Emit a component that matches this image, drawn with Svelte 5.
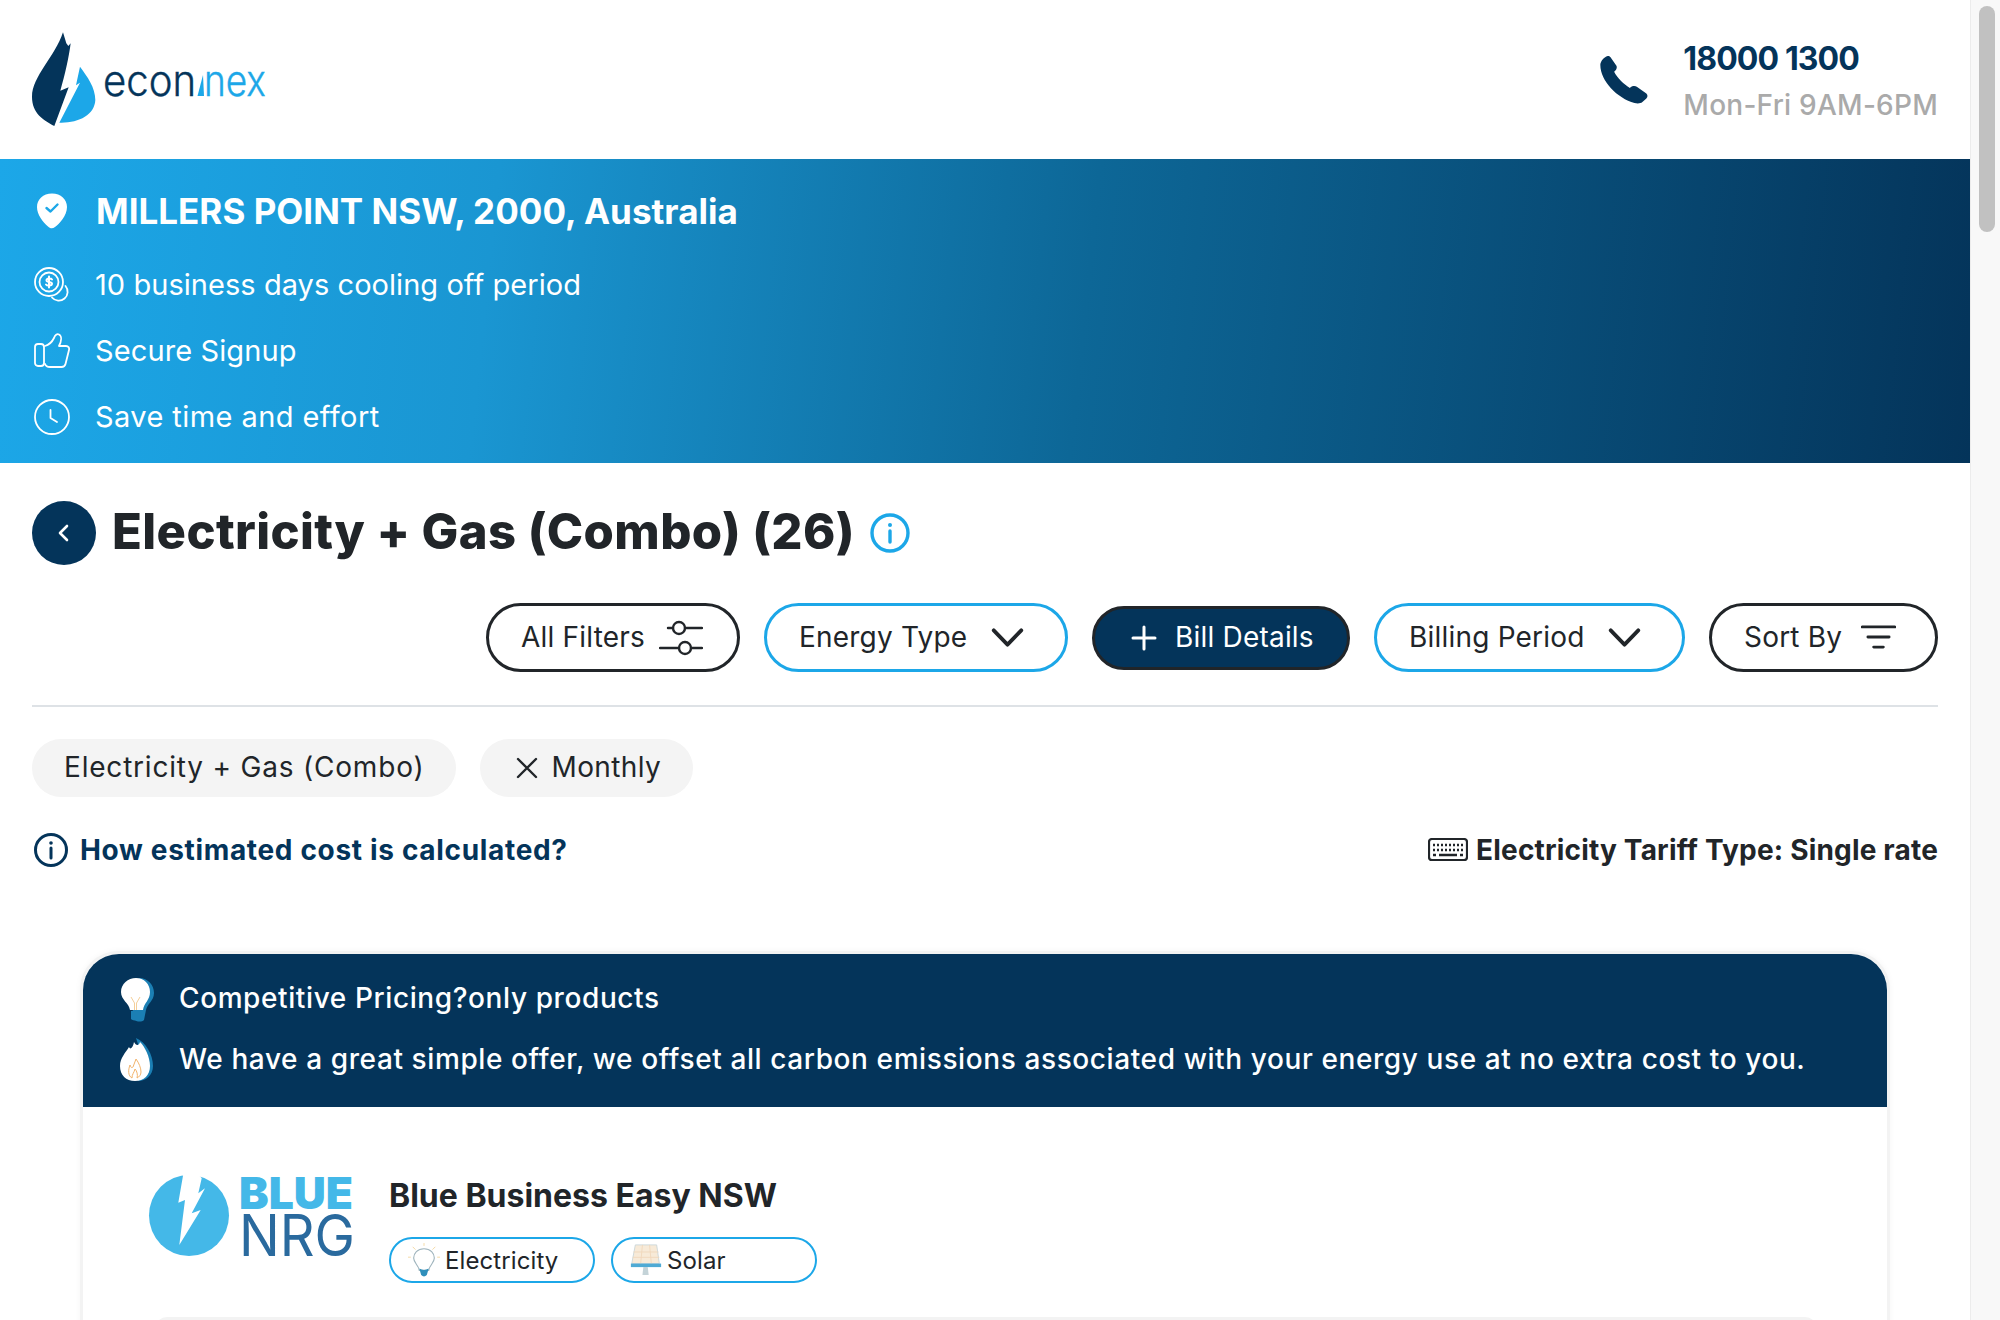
<script>
  const perks = [
    { text: '10 business days cooling off period', icon: 'coin' },
    { text: 'Secure Signup', icon: 'like' },
    { text: 'Save time and effort', icon: 'clock' }
  ];
</script>

<div class="page">
  <main class="main">
    <header class="header">
      <svg class="logo" viewBox="0 0 300 160" width="300" height="160" role="img" aria-label="econnex">
        <g transform="scale(0.3333)">
          <path fill="#04345a" d="M189 97 L199 130 L205 138 L212 130 C207 170 195 225 181 272 L206 262 L163 378 C130 360 96 340 96 290 C96 230 165 170 189 97 Z"/>
          <path fill="#1ca7e8" d="M240 200 C262 230 286 262 286 300 C284 345 235 370 178 368 L240 248 L228 256 Z"/>
        </g>
        <text class="logo-text" x="103" y="96" textLength="93" lengthAdjust="spacingAndGlyphs" fill="#04345a" stroke="#04345a" stroke-width="0.4">econ</text>
        <text class="logo-text" x="204" y="96" textLength="62" lengthAdjust="spacingAndGlyphs" fill="#1ca7e8" stroke="#1ca7e8" stroke-width="0.4">nex</text>
        <path fill="#1ca7e8" d="M203 75 L197.500 96 L204 96 Z"/>
      </svg>
      <div class="contact">
        <svg class="phone" viewBox="117 168 146 146" width="48" height="48" aria-hidden="true">
          <path fill="#04345a" d="M135 170 C140 167 146 168 149 172 L167 198 C170 204 166 212 160 216 C170 236 190 254 208 265 C214 258 224 258 230 262 L258 282 C263 287 262 293 258 297 L246 308 C240 313 230 313 222 311 C170 296 118 244 118 195 C118 186 126 175 135 170 Z"/>
        </svg>
        <div class="contact-text">
          <div class="tel">18000 1300</div>
          <div class="hours">Mon-Fri 9AM-6PM</div>
        </div>
      </div>
    </header>

    <section class="hero">
      <div class="hero-head">
        <span class="hero-pin">
          <svg viewBox="0 0 30 36" width="30" height="36" aria-hidden="true">
            <path fill="#fff" d="M15 0.5 C24 0.5 30 6.500 30 14 C30 23 22 31 18 34 C15.500 36 13 35.500 11 33.500 C6 29 0 22 0 14 C0 6.500 6 0.500 15 0.500 Z"/>
            <path fill="none" stroke="#1ca7e8" stroke-width="2.400" stroke-linecap="round" stroke-linejoin="round" d="M9.500 15 L13.500 18.500 L20.500 11.500"/>
          </svg>
        </span>
        <h2>MILLERS POINT NSW, 2000, Australia</h2>
      </div>
      {#each perks as perk}
        <div class="perk perk-{perk.icon}">
          <span class="hero-icon">
            {#if perk.icon === 'coin'}
              <svg viewBox="0 0 36 36" width="36" height="36" fill="none" stroke="#fff" stroke-width="1.800" stroke-linecap="round" aria-hidden="true">
                <circle cx="15" cy="15" r="14"/>
                <circle cx="15" cy="15" r="9.500"/>
                <path stroke-width="2" d="M18 12.500 C17 11 12.500 11 12.500 13.500 C12.500 15.500 18 14.500 18 16.800 C18 19 13 19 12 17.500 M15 9.500 V20.500"/>
                <path d="M31.500 19 A8.500 8.500 0 1 1 18 30.500"/>
              </svg>
            {:else if perk.icon === 'like'}
              <svg viewBox="0 0 36 36" width="36" height="36" fill="none" stroke="#fff" stroke-width="1.800" stroke-linejoin="round" stroke-linecap="round" aria-hidden="true">
                <rect x="1" y="11" width="9" height="22" rx="3"/>
                <path d="M11 13 C15 12 18 9 20 5 C21 2 23 0.500 25 1.500 C28 3 27.500 8 25 13 H32 C34.500 13 35.500 15 35 17 L31.500 31 C31 33 29.500 34 27.500 34 H16 C13 34 11.500 32.500 11 31"/>
              </svg>
            {:else}
              <svg viewBox="0 0 36 36" width="36" height="36" fill="none" stroke="#fff" stroke-width="1.800" stroke-linecap="round" stroke-linejoin="round" aria-hidden="true">
                <circle cx="18" cy="18" r="17"/>
                <path d="M16.500 11 V19 L23 23"/>
              </svg>
            {/if}
          </span>
          <span class="perk-text">{perk.text}</span>
        </div>
      {/each}
    </section>

    <div class="content">
      <div class="title-row">
        <button class="back" aria-label="Back">
          <svg viewBox="0 0 24 24" width="24" height="24" fill="none" stroke="#fff" stroke-width="2.600" stroke-linecap="round" stroke-linejoin="round"><path d="M15 5 L8 12 L15 19"/></svg>
        </button>
        <h1>Electricity + Gas (Combo) (26)</h1>
        <svg class="title-info" viewBox="0 0 40 40" width="40" height="40" fill="none" stroke="#1ca7e8" stroke-width="3.400" stroke-linecap="round" aria-hidden="true">
          <circle cx="20" cy="20" r="18"/>
          <path d="M20 18 V29"/>
          <circle cx="20" cy="12" r="2" fill="#1ca7e8" stroke="none"/>
        </svg>
      </div>

      <div class="filters">
        <button class="pill dark all">
          <span>All Filters</span>
          <svg viewBox="0 0 44 36" width="44" height="36" fill="none" stroke="#212529" stroke-width="2.400" stroke-linecap="round" aria-hidden="true">
            <circle cx="20" cy="8" r="6"/>
            <path d="M9 8 H14 M26 8 H43"/>
            <circle cx="26" cy="28" r="6"/>
            <path d="M1 28 H20 M32 28 H43"/>
          </svg>
        </button>
        <button class="pill blue energy">
          <span>Energy Type</span>
          <svg class="chev" viewBox="0 0 34 20" width="33" height="19" fill="none" stroke="#212529" stroke-width="4" stroke-linecap="round" stroke-linejoin="round"><path d="M2.500 2.500 L17 17.500 L31.500 2.500"/></svg>
        </button>
        <button class="pill solid">
          <svg viewBox="0 0 26 26" width="26" height="26" fill="none" stroke="#fff" stroke-width="3" stroke-linecap="round"><path d="M13 2 V24 M2 13 H24"/></svg>
          <span>Bill Details</span>
        </button>
        <button class="pill blue billing">
          <span>Billing Period</span>
          <svg class="chev" viewBox="0 0 34 20" width="33" height="19" fill="none" stroke="#212529" stroke-width="4" stroke-linecap="round" stroke-linejoin="round"><path d="M2.500 2.500 L17 17.500 L31.500 2.500"/></svg>
        </button>
        <button class="pill dark sort">
          <span>Sort By</span>
          <svg viewBox="0 0 36 26" width="35" height="25" fill="none" stroke="#212529" stroke-width="3" stroke-linecap="round"><path d="M1 2 H35 M7 12.500 H29 M13 23 H23"/></svg>
        </button>
      </div>

      <hr class="rule" />

      <div class="chips">
        <span class="chip"><span class="chip-text">Electricity + Gas (Combo)</span></span>
        <span class="chip chip-x">
          <svg viewBox="0 0 22 22" width="22" height="22" fill="none" stroke="#212529" stroke-width="2.400" stroke-linecap="round"><path d="M2 2 L20 20 M20 2 L2 20"/></svg>
          <span class="chip-text">Monthly</span>
        </span>
      </div>

      <div class="notes">
        <a class="how" href="#how">
          <svg viewBox="0 0 34 34" width="34" height="34" fill="none" stroke="#04345a" stroke-width="3" stroke-linecap="round" aria-hidden="true">
            <circle cx="17" cy="17" r="15.500"/>
            <path d="M17 15 V25"/>
            <circle cx="17" cy="10" r="1.800" fill="#04345a" stroke="none"/>
          </svg>
          <span>How estimated cost is calculated?</span>
        </a>
        <div class="tariff">
          <svg viewBox="0 0 40 24" width="40" height="24" fill="none" aria-hidden="true">
            <rect x="1" y="1" width="38" height="21" rx="3" stroke="#212529" stroke-width="2.200"/>
            <path stroke="#212529" stroke-width="2.400" stroke-dasharray="2 2" d="M5 7 H35 M5 12 H35"/>
            <path stroke="#212529" stroke-width="2.400" d="M5 17 H8 M11 17 H29 M32 17 H35"/>
          </svg>
          <span>Electricity Tariff Type: Single rate</span>
        </div>
      </div>

      <article class="card">
        <div class="banner">
          <div class="banner-row">
            <svg class="bulb" viewBox="0 0 34 46" width="34" height="46" aria-hidden="true">
              <path fill="#1b7fb4" d="M19 1 C28 1 34 8 34 16 C34 24 27 27 26 33 L24 43 C22 45 17 45 15 43 L12 30 Z"/>
              <path fill="#fff" d="M16 1 C24 1 30 7 30 15 C30 23 24 26 23 33 H10 C9 26 1 23 1 15 C1 7 8 1 16 1 Z"/>
              <path fill="none" stroke="#f4cf99" stroke-width="1" d="M11 20 L14.500 26 V33 M20 20 L16.500 26 V33"/>
              <path fill="#1b7fb4" d="M11 34 H22 V42 C20 44 13 44 11 42 Z"/>
            </svg>
            <span class="banner-text">Competitive Pricing?only products</span>
          </div>
          <div class="banner-row">
            <svg viewBox="0 0 34 44" width="34" height="44" aria-hidden="true">
              <path fill="#1b7fb4" d="M16 0 C26 4 33 17 33 28 C33 37 26 43 18 43 L18 6 Z"/>
              <path fill="#fff" d="M14 4 C16 8 19 8 20 4 C25 9 30 19 30 28 C30 37 24 43 15 43 C6 43 0 37 0 28 C0 20 6 14 9 9 C10 12 13 10 14 4 Z"/>
              <path fill="none" stroke="#f2b36b" stroke-width="1" d="M12 40 C8 38 8 32 10 27 C11 30 12 30 13 29 C14 26 15 24 16 21 C19 25 21 30 21 34 C21 37 19 39 17 40 C18 37 17 33 15 31 C14 35 12 36 12 40 Z"/>
            </svg>
            <span class="banner-text">We have a great simple offer, we offset all carbon emissions associated with your energy use at no extra cost to you.</span>
          </div>
        </div>

        <div class="card-body">
          <div class="plan">
            <svg class="brand" viewBox="0 0 214 84" width="214" height="84" role="img" aria-label="Blue NRG">
              <ellipse cx="41" cy="40.500" rx="40" ry="40.500" fill="#44b8e8"/>
              <path fill="#fff" d="M35.300 -1 L30.300 27.700 L37 25 L31.300 70 L52.700 35 L43.700 38.300 L57 13.300 L50.300 18.300 L53.700 3.300 L50 -1 Z"/>
              <text class="brand-blue" x="91" y="34" textLength="114" lengthAdjust="spacingAndGlyphs">BLUE</text>
              <text class="brand-nrg" x="91" y="81" textLength="116" lengthAdjust="spacingAndGlyphs">NRG</text>
            </svg>
            <div class="plan-info">
              <h3>Blue Business Easy NSW</h3>
              <div class="tags">
                <span class="tag">
                  <svg viewBox="0 0 34 36" width="34" height="36" aria-hidden="true">
                    <path fill="#fff" stroke="#9fb4bd" stroke-width="1.200" d="M17 6 C24 6 28 11 28 16 C28 21 23 23 22 29 H12 C11 23 6 21 6 16 C6 11 10 6 17 6 Z"/>
                    <path fill="#2f8fbb" d="M12 27 C15 29 19 29 22 27 L20 34 C18 36 16 36 14 34 Z"/>
                    <path stroke="#f4d7a0" stroke-width="1" d="M17 0 V3 M5 4 L8 7 M29 4 L26 7 M0 15 H3 M31 15 H34"/>
                  </svg>
                  <span>Electricity</span>
                </span>
                <span class="tag">
                  <svg viewBox="0 0 36 36" width="36" height="36" aria-hidden="true">
                    <path fill="#f7ead8" stroke="#c9d5d9" stroke-width="1" d="M6 1 H30 L33 22 H2 Z"/>
                    <path stroke="#f0d7bb" stroke-width="1" d="M14 1 L12 22 M22 1 L24 22 M4 9 H32 M3 15 H33"/>
                    <path fill="#4faad4" d="M1 22 H35 V26 H1 Z"/>
                    <path fill="#c4d3d8" d="M15 26 H20 L21 35 H14 Z"/>
                  </svg>
                  <span>Solar</span>
                </span>
              </div>
            </div>
          </div>
          <div class="divider"></div>
        </div>
      </article>
    </div>
  </main>

  <aside class="scrollbar" aria-hidden="true"><div class="thumb"></div></aside>
</div>

<style>
  :global(body) {
    margin: 0;
    overflow: hidden;
    background: #fff;
  }
  .page {
    display: flex;
    width: 2000px;
    height: 1320px;
    overflow: hidden;
    font-family: Inter, "Noto Sans", sans-serif;
    color: #212529;
    background: #fff;
  }
  .main {
    flex: 1;
    min-width: 0;
  }
  .scrollbar {
    width: 30px;
    box-sizing: border-box;
    padding: 6px 6px 0 8px;
    background: #f8f8f8;
    border-left: 1px solid #ececec;
  }
  .thumb {
    width: 16px;
    height: 226px;
    border-radius: 8px;
    background: #c1c1c1;
  }

  .header {
    height: 159px;
    display: flex;
    align-items: center;
    justify-content: space-between;
    padding-right: 32px;
  }
  .logo {
    display: block;
  }
  .logo-text {
    font-family: Inter, sans-serif;
    font-weight: 300;
    font-size: 43px;
  }
  .contact {
    display: flex;
    align-items: center;
    gap: 35px;
    padding-top: 3px;
  }
  .phone {
    display: block;
    margin-top: -3px;
  }
  .tel {
    font-size: 32px;
    line-height: 48px;
    font-weight: 700;
    color: #04345a;
    letter-spacing: -0.9px;
  }
  .hours {
    font-size: 28px;
    line-height: 44px;
    font-weight: 500;
    color: #aaa;
    letter-spacing: 0.25px;
  }

  .hero {
    height: 304px;
    box-sizing: border-box;
    padding: 28px 32px 0;
    color: #fff;
    background: linear-gradient(96deg, #1ca7e8 0%, #1a96d2 25%, #0d6797 55%, #04345a 100%);
  }
  .hero-head {
    display: flex;
    align-items: center;
    gap: 25px;
    height: 48px;
    margin-bottom: 17px;
  }
  .hero-head h2 {
    margin: 0 0 1px;
    font-size: 35px;
    font-weight: 700;
    letter-spacing: 0.02px;
    white-space: nowrap;
  }
  .hero-pin {
    display: flex;
    flex: none;
    width: 39px;
    box-sizing: border-box;
    padding-left: 5px;
  }
  .hero-pin svg {
    display: block;
  }
  .hero-icon {
    display: flex;
    flex: none;
    width: 44px;
    box-sizing: border-box;
    align-items: center;
  }
  .hero-icon svg {
    display: block;
    margin-left: 2px;
  }
  .perk {
    display: flex;
    align-items: center;
    gap: 19px;
    height: 66px;
    font-size: 29px;
    letter-spacing: 0.05px;
    white-space: nowrap;
  }
  .perk-text {
    margin-bottom: 2px;
  }
  .perk-like {
    letter-spacing: 0.1px;
  }
  .perk-clock {
    letter-spacing: 0.42px;
  }

  .content {
    padding: 38px 32px 0;
  }
  .title-row {
    display: flex;
    align-items: center;
    height: 64px;
  }
  .back {
    width: 64px;
    height: 64px;
    padding: 0;
    margin-right: 16px;
    display: flex;
    align-items: center;
    justify-content: center;
    border: 0;
    border-radius: 50%;
    background: #04345a;
  }
  h1 {
    margin: 0 0 4px;
    font-size: 49px;
    font-weight: 800;
    letter-spacing: 0.4px;
    white-space: nowrap;
  }
  .title-info {
    display: block;
    margin-left: 15px;
  }

  .filters {
    display: flex;
    justify-content: flex-end;
    align-items: center;
    gap: 24px;
    height: 69px;
    margin-top: 38px;
  }
  .pill {
    display: flex;
    align-items: center;
    justify-content: space-between;
    box-sizing: border-box;
    height: 69px;
    padding: 0 32px;
    background: #fff;
    border-radius: 35px;
    border: 3px solid #212529;
    font: inherit;
    font-size: 28px;
    letter-spacing: 0.2px;
    color: #212529;
    white-space: nowrap;
  }
  .pill span {
    margin-bottom: 2px;
  }
  .pill svg {
    display: block;
    flex: none;
  }
  .all {
    width: 254px;
    padding-right: 34px;
  }
  .energy {
    width: 304px;
    padding-right: 41px;
  }
  .billing {
    width: 311px;
    padding-right: 41px;
  }
  .sort {
    width: 229px;
    padding-right: 39px;
  }
  .blue {
    border-color: #1ca7e8;
  }
  .solid {
    width: 258px;
    height: 64px;
    background: #04345a;
    color: #fff;
    justify-content: flex-start;
    gap: 18px;
    padding-left: 36px;
  }
  .rule {
    margin: 33px 0 0;
    border: 0;
    border-top: 2px solid #dee2e6;
  }
  .chips {
    display: flex;
    gap: 24px;
    margin-top: 32px;
  }
  .chip {
    display: flex;
    align-items: center;
    gap: 13px;
    height: 58px;
    padding: 0 32px;
    border-radius: 29px;
    background: #f4f4f4;
    font-size: 28px;
    letter-spacing: 0.8px;
    white-space: nowrap;
  }
  .chip-text {
    margin-bottom: 2px;
  }
  .chip-x {
    padding-left: 36px;
    letter-spacing: 0.4px;
  }
  .notes {
    display: flex;
    justify-content: space-between;
    align-items: center;
    height: 34px;
    margin-top: 36px;
    font-size: 28px;
    font-weight: 700;
    white-space: nowrap;
  }
  .how {
    display: flex;
    align-items: center;
    gap: 12px;
    padding-left: 2px;
    color: #04345a;
    text-decoration: none;
    letter-spacing: 0.67px;
  }
  .tariff {
    display: flex;
    align-items: center;
    gap: 8px;
    letter-spacing: 0.18px;
  }
  .how svg, .tariff svg {
    display: block;
  }

  .card {
    margin: 84px 48px 0;
    border: 3px solid #f3f3f3;
    border-bottom: 0;
    border-radius: 38px 38px 0 0;
    box-shadow: 0 0 6px rgba(0, 0, 0, 0.04);
    background: #fff;
  }
  .banner {
    height: 153px;
    box-sizing: border-box;
    padding: 14px 37px 0;
    border-radius: 36px 36px 0 0;
    background: #04345a;
    color: #fff;
    font-size: 28px;
    font-weight: 500;
    letter-spacing: 0.6px;
  }
  .banner-row {
    display: flex;
    align-items: center;
    gap: 25px;
    height: 61px;
    white-space: nowrap;
  }
  .banner-text {
    margin-bottom: 2px;
  }
  .banner-row svg {
    display: block;
    flex: none;
  }
  .banner-row .bulb {
    margin-top: 3px;
  }
  .card-body {
    padding: 65px 65px 0;
  }
  .plan {
    display: flex;
    gap: 27px;
  }
  .brand {
    display: block;
    flex: none;
    margin-top: 3px;
  }
  .brand-blue {
    font-family: Inter, sans-serif;
    font-size: 44px;
    font-weight: 900;
    fill: #44b8e8;
  }
  .brand-nrg {
    font-family: Inter, sans-serif;
    font-size: 58px;
    font-weight: 400;
    fill: #2a6a9e;
  }
  .plan-info h3 {
    margin: 0;
    font-size: 32px;
    line-height: 48px;
    font-weight: 700;
    letter-spacing: 0;
    white-space: nowrap;
  }
  .tags {
    display: flex;
    gap: 16px;
    margin-top: 17px;
  }
  .tag {
    display: flex;
    align-items: center;
    gap: 5px;
    box-sizing: border-box;
    width: 206px;
    height: 46px;
    padding-left: 17px;
    border: 2px solid #1ca7e8;
    border-radius: 23px;
    font-size: 24px;
    letter-spacing: 0.1px;
  }
  .tag svg {
    display: block;
    flex: none;
    width: 32px;
  }
  .divider {
    width: 1662px;
    height: 40px;
    margin: 34px 0 0 7px;
    border-radius: 12px;
    background: #f3f3f3;
  }
</style>
